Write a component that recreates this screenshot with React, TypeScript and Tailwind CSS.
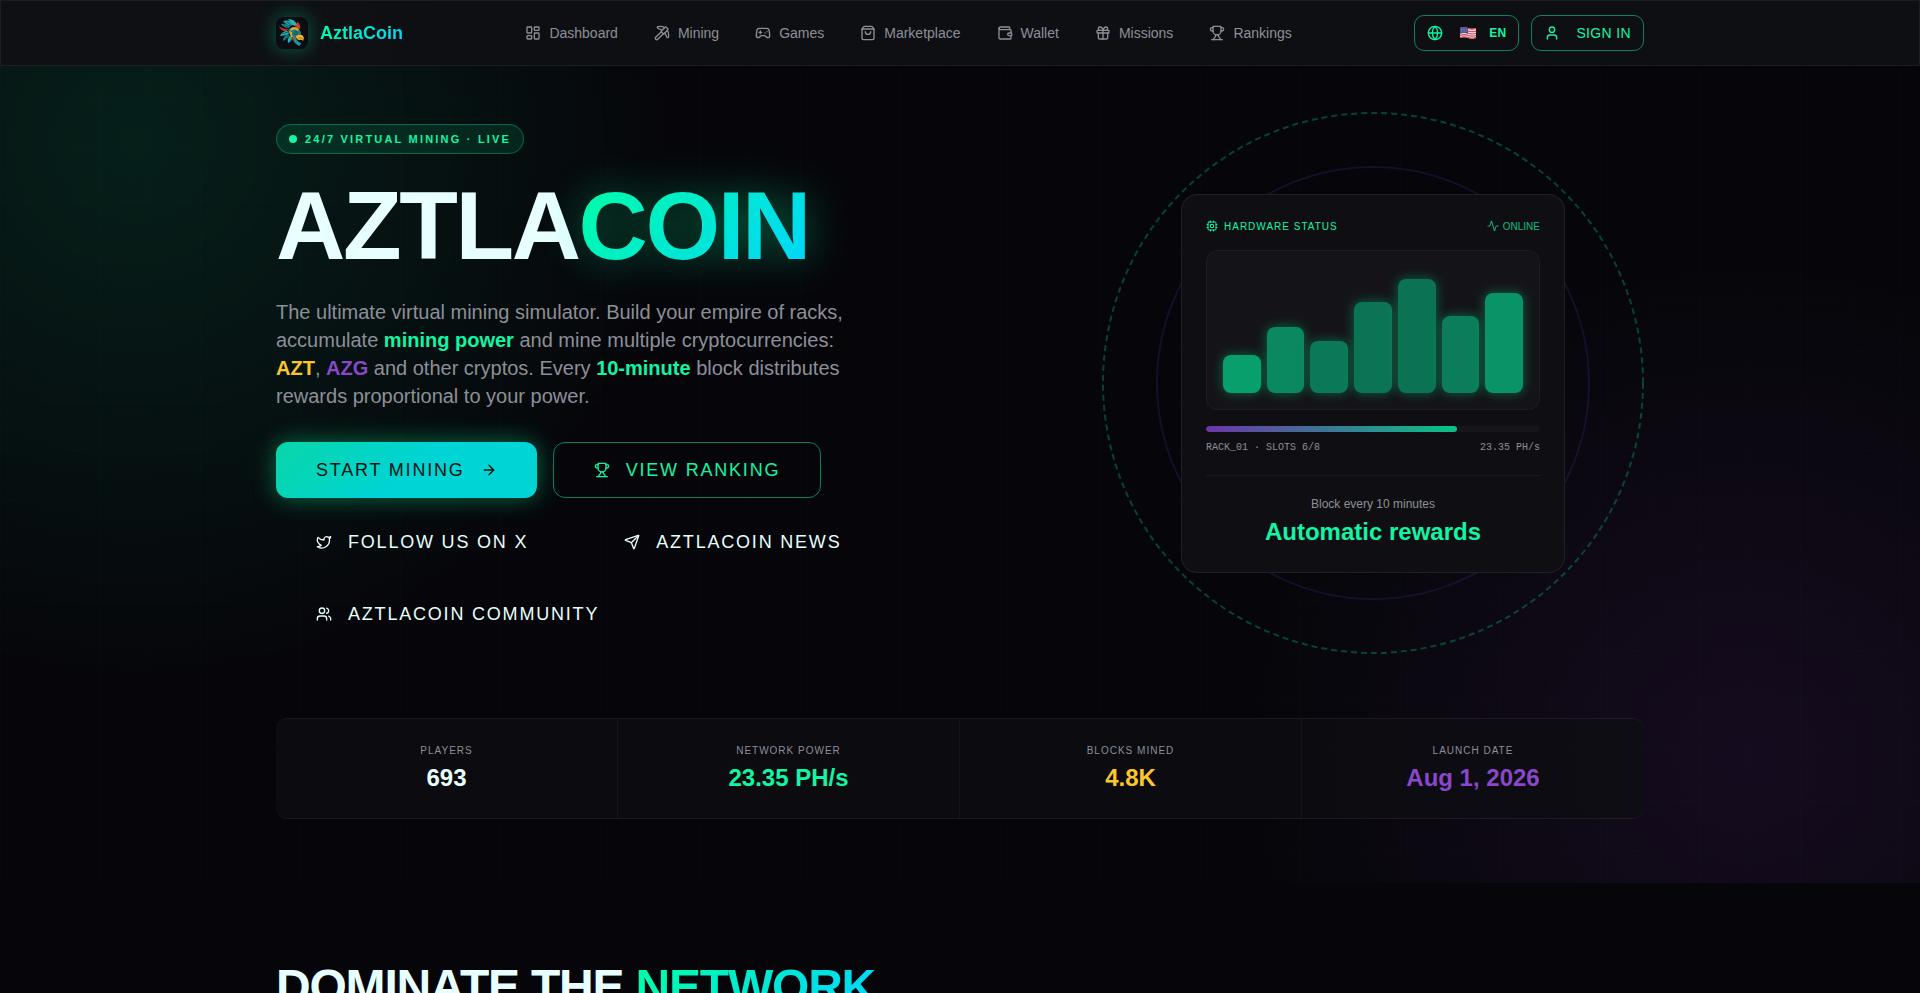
import React from "react";
import {
  Activity,
  ArrowRight,
  Gamepad2,
  Gift,
  Globe,
  LayoutDashboard,
  Pickaxe,
  Send,
  ShoppingBag,
  Trophy,
  Twitter,
  User,
  Users,
  Wallet,
} from "lucide-react";

const navItems = [
  { label: "Dashboard", icon: LayoutDashboard },
  { label: "Mining", icon: Pickaxe },
  { label: "Games", icon: Gamepad2 },
  { label: "Marketplace", icon: ShoppingBag },
  { label: "Wallet", icon: Wallet },
  { label: "Missions", icon: Gift },
  { label: "Rankings", icon: Trophy },
];

const bars = [
  { height: 30, color: "bg-[#099f6d]" },
  { height: 52, color: "bg-[#0a8860]" },
  { height: 41, color: "bg-[#0b7857]" },
  { height: 72, color: "bg-[#0b7454]" },
  { height: 90, color: "bg-[#0b7353]" },
  { height: 61, color: "bg-[#0b7d5a]" },
  { height: 79, color: "bg-[#099366]" },
];

const stats = [
  { label: "PLAYERS", value: "693", color: "text-[#e8fffb]" },
  { label: "NETWORK POWER", value: "23.35 PH/s", color: "text-[#12f5a4]" },
  { label: "BLOCKS MINED", value: "4.8K", color: "text-[#fcc62b]" },
  { label: "LAUNCH DATE", value: "Aug 1, 2026", color: "text-[#8848c8]" },
];

const LogoMark: React.FC = () => (
  <svg viewBox="0 0 32 32" className="size-8" aria-hidden="true">
    <rect width="32" height="32" rx="8" fill="#0b0d12" />
    {/* Crest feathers */}
    <path d="M12 12 Q6 12 3 9 Q4 13 10 15Z" fill="#c9302c" />
    <path d="M19 9 Q20 6 22 5 Q25 9 24 12 Q21 12 19 9Z" fill="#d23a2c" />
    <path d="M15 9 Q10 8 7 4 Q13 2 18 7Z" fill="#1fa3a8" />
    <path d="M18 9 Q14 5 12 2 Q19 2 21 8Z" fill="#23b5b0" />
    <path d="M13 11 Q8 11 5 7 Q9 6 14 9Z" fill="#1b8f98" />
    <path d="M12 14 Q6 14 4 19 Q8 19 13 17Z" fill="#24b3ae" />
    <path d="M12 17 Q7 19 7 24 Q11 22 14 19Z" fill="#17818c" />
    <path d="M14 19 Q11 22 12 26 Q16 24 17 21Z" fill="#28b9ae" />
    <path d="M17 20 Q16 25 23 29 Q25 28 25 26 Q20 24 20 20Z" fill="#1b969c" />
    <path d="M15 18 Q15 22 18 24 L19 20Z" fill="#cc3a2b" />
    {/* Head */}
    <path d="M12 13 Q15 9 21 11 Q25 13 25 17 Q23 21 19 21 Q14 19 12 13Z" fill="#1a7d80" />
    <path d="M14 12 Q18 8 23 12 L22 14 Q18 11 15 14Z" fill="#e0a63a" />
    <path d="M13 14 L16 15 L16 18 L18 21 L15 20Z" fill="#e8a52e" />
    <circle cx="20" cy="16" r="1.5" fill="#07262a" />
    <circle cx="20" cy="16" r="0.7" fill="#5ff0d8" />
    {/* Beak */}
    <path d="M20 19 Q23 17 26 18 Q29 20 27 24 Q26 22 23 23 Q20 22 20 19Z" fill="#f0b32f" />
    <path d="M22 21 Q25 20 27 22" stroke="#a86a14" strokeWidth="0.7" fill="none" />
    <path d="M7 7 L13 11 M11 5 L16 9 M6 17 L12 15 M9 22 L14 18 M14 24 L17 20" stroke="#0c3d45" strokeWidth="0.7" />
  </svg>
);

const FlagUS: React.FC = () => (
  <svg viewBox="0 0 18 14" className="h-3.5 w-[18px]" aria-hidden="true">
    <path d="M1 2 Q5 0.5 9 2 T17 2 V12 Q13 13.5 9 12 T1 12Z" fill="#efe6e8" />
    <path
      d="M1 2.5 Q5 1 9 2.5 T17 2.5 M1 5 Q5 3.5 9 5 T17 5 M1 7.2 Q5 5.7 9 7.2 T17 7.2 M1 9.4 Q5 7.9 9 9.4 T17 9.4 M1 11.5 Q5 10 9 11.5 T17 11.5"
      stroke="#d0414f"
      strokeWidth="1.1"
      fill="none"
    />
    <path d="M1 2 Q5 0.5 9 2 V7.5 Q5 6 1 7.5Z" fill="#4a5596" />
    <path d="M2 3.2 H8 M2 5 H8" stroke="#b9c0e0" strokeWidth="0.6" strokeDasharray="0.8 0.9" />
  </svg>
);

const ChipIcon: React.FC = () => (
  <svg
    viewBox="0 0 24 24"
    className="size-3"
    fill="none"
    stroke="currentColor"
    strokeWidth="2"
    strokeLinecap="round"
    strokeLinejoin="round"
    aria-hidden="true"
  >
    <rect x="4" y="4" width="16" height="16" rx="2" />
    <rect x="9" y="9" width="6" height="6" rx="1" />
    <path d="M15 2v2M15 20v2M2 15h2M2 9h2M20 15h2M20 9h2M9 2v2M9 20v2" />
  </svg>
);

const Header: React.FC = () => (
  <header className="relative z-10 border border-white/6 bg-[#0f1014]/95">
    <div className="mx-auto flex h-16 max-w-[1400px] items-center justify-between px-4">
      <a href="#home" className="flex items-center gap-3">
        <span className="rounded-lg shadow-[0_0_20px_rgba(0,255,170,0.35)]">
          <LogoMark />
        </span>
        <span className="bg-linear-[135deg,#00ffa3,#00d4ff] bg-clip-text text-lg font-bold text-transparent">
          AztlaCoin
        </span>
      </a>

      <nav className="flex items-center gap-9">
        {navItems.map(({ label, icon: Icon }) => (
          <a
            key={label}
            href={`#${label.toLowerCase()}`}
            className="flex items-center gap-2 text-sm text-[#8d8f98]"
          >
            <Icon className="size-4" />
            {label}
          </a>
        ))}
      </nav>

      <div className="flex items-center gap-3">
        <button className="flex h-9 items-center gap-4 rounded-[10px] border border-[#12f5a4]/50 px-3 text-[#12f5a4]">
          <Globe className="size-4" />
          <span className="flex items-center gap-3">
            <FlagUS />
            <span className="text-xs font-bold tracking-wide">EN</span>
          </span>
        </button>
        <button className="flex h-9 items-center gap-4 rounded-[10px] border border-[#12f5a4]/50 px-3 text-sm tracking-wide text-[#12f5a4]">
          <User className="size-4" />
          SIGN IN
        </button>
      </div>
    </div>
  </header>
);

const HardwareCard: React.FC = () => (
  <div className="relative flex aspect-square items-center justify-center">
    {/* Rings behind the card */}
    <svg viewBox="0 0 542 542" className="absolute inset-0 size-full" aria-hidden="true">
      <circle
        cx="271"
        cy="271"
        r="270"
        fill="none"
        stroke="#00ffa3"
        strokeOpacity="0.25"
        strokeWidth="2"
        strokeDasharray="6 4"
      />
      <circle cx="271" cy="271" r="216" fill="none" stroke="#7a50ff" strokeOpacity="0.13" strokeWidth="2" />
    </svg>

    <div className="relative w-full max-w-96 rounded-2xl border border-white/7 bg-[#0f0f13] p-6">
      <div className="mb-4 flex items-center justify-between text-[10px] leading-[15px]">
        <span className="flex items-center gap-1.5 tracking-[1px] text-[#12f5a4]">
          <ChipIcon />
          HARDWARE STATUS
        </span>
        <span className="flex items-center gap-1 text-[#12f5a4]/75">
          <Activity className="size-3" />
          ONLINE
        </span>
      </div>

      <div className="flex h-40 items-end gap-1.5 rounded-xl border border-white/4 bg-[#141418] p-4">
        {bars.map((bar) => (
          <div
            key={bar.height}
            className={`flex-1 rounded-lg shadow-[0_0_12px_rgba(0,255,163,0.35)] ${bar.color}`}
            style={{ height: `${bar.height}%` }}
          />
        ))}
      </div>

      <div className="mt-4 h-1.5 overflow-hidden rounded-full bg-white/3">
        <div className="h-full w-3/4 rounded-full bg-linear-[90deg,#6d36a8,#3a7a94_50%,#08c487]" />
      </div>
      <div className="mt-2 flex justify-between font-['Liberation_Mono',monospace] text-[10px] leading-[15px] text-[#8d8f98]">
        <span>RACK_01 · SLOTS 6/8</span>
        <span>23.35 PH/s</span>
      </div>

      <div className="mt-5 border-t border-white/5 pt-5 text-center">
        <p className="text-xs text-[#8d8f98]">Block every 10 minutes</p>
        <p className="mt-1 text-2xl font-bold text-[#12f5a4]">Automatic rewards</p>
      </div>
    </div>
  </div>
);

const Hero: React.FC = () => (
  <section className="relative -mt-[66px] bg-[radial-gradient(circle_at_7%_16%,rgba(0,255,163,0.1),transparent_540px),radial-gradient(circle_at_91%_86%,rgba(136,50,180,0.12),transparent_500px)] pt-28 pb-16">
    <div className="absolute inset-0 bg-[linear-gradient(rgba(0,255,163,0.01)_1px,transparent_1px),linear-gradient(90deg,rgba(0,255,163,0.01)_1px,transparent_1px)] bg-size-[50px_50px]" />

    <div className="relative mx-auto max-w-[1400px] px-4">
      <div className="grid grid-cols-12 items-center gap-12">
        <div className="col-span-7">
          <div className="flex w-fit items-center gap-2 rounded-full border border-[#00ffa3]/30 bg-[#00ffa3]/10 px-3 py-1.5 text-[11px] leading-4 font-bold tracking-[0.2em] text-[#12f5a4]">
            <span className="size-2 rounded-full bg-[#12f5a4]" />
            24/7 VIRTUAL MINING · LIVE
          </div>

          <h1 className="mt-6 text-8xl leading-none font-bold tracking-tight text-[#e8ffff]">
            AZTLA
            <span className="bg-linear-[135deg,#00ffa3,#00d4ff] bg-clip-text text-transparent drop-shadow-[0_0_20px_rgba(0,255,163,0.4)]">
              COIN
            </span>
          </h1>

          <p className="mt-6 max-w-xl text-xl leading-7 text-[#8d8f98]">
            The ultimate virtual mining simulator. Build your empire of racks,
            accumulate <strong className="text-[#12f5a4]">mining power</strong>{" "}
            and mine multiple cryptocurrencies:{" "}
            <strong className="text-[#fcc62b]">AZT</strong>,{" "}
            <strong className="text-[#8848c8]">AZG</strong> and other cryptos.
            Every <strong className="text-[#12f5a4]">10-minute</strong> block
            distributes rewards proportional to your power.
          </p>

          <div className="mt-8 flex flex-wrap gap-4 text-lg tracking-widest">
            <button className="flex h-14 items-center gap-4 rounded-xl bg-linear-[135deg,#08d6a8,#00d4d4_50%] px-10 tracking-widest text-[#05120f] shadow-[0_0_24px_rgba(0,255,163,0.4)]">
              START MINING
              <ArrowRight className="size-4" />
            </button>
            <button className="flex h-14 items-center gap-4 rounded-xl border border-[#12f5a4]/50 px-10 tracking-widest text-[#12f5a4]">
              <Trophy className="size-4" />
              VIEW RANKING
            </button>
            <a href="#x" className="flex h-14 items-center gap-4 px-10 text-[#e8fffb]">
              <Twitter className="size-4" />
              FOLLOW US ON X
            </a>
            <a href="#news" className="flex h-14 items-center gap-4 px-10 text-[#e8fffb]">
              <Send className="size-4" />
              AZTLACOIN NEWS
            </a>
            <a href="#community" className="flex h-14 items-center gap-4 px-10 text-[#e8fffb]">
              <Users className="size-4" />
              AZTLACOIN COMMUNITY
            </a>
          </div>
        </div>

        <div className="col-span-5">
          <HardwareCard />
        </div>
      </div>

      {/* Network stats */}
      <dl className="mt-16 grid grid-cols-4 divide-x divide-white/4 rounded-xl border-y border-white/6 bg-[#0e0e12]/70">
        {stats.map((stat) => (
          <div key={stat.label} className="p-6 text-center">
            <dt className="text-[10px] leading-[15px] tracking-[1px] text-[#8d8f98]">{stat.label}</dt>
            <dd className={`mt-1 text-2xl font-bold ${stat.color}`}>{stat.value}</dd>
          </div>
        ))}
      </dl>
    </div>
  </section>
);

export default function App() {
  return (
    <div className="min-h-screen bg-[#06060a] font-['Liberation_Sans',Arial,sans-serif]">
      <Header />
      <main>
        <Hero />
        <section className="mx-auto max-w-[1400px] px-4 py-20">
          <h2 className="text-5xl leading-none font-bold tracking-tight text-[#e8ffff]">
            DOMINATE THE{" "}
            <span className="bg-linear-[135deg,#00ffa3,#00d4ff] bg-clip-text text-transparent">
              NETWORK
            </span>
          </h2>
        </section>
      </main>
    </div>
  );
}
